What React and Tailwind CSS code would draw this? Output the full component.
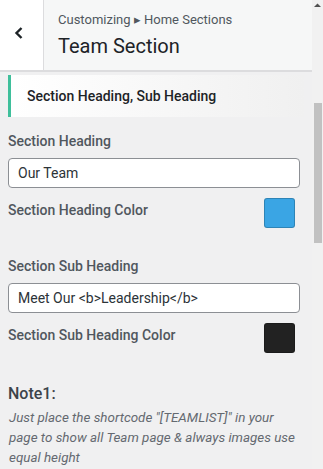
import React from 'react';

function Field({ label, value, top }) {
    return (
        <div className={top}>
            <div className="text-[14px] font-medium text-[#50575e] leading-5">{label}</div>
            <div className="mt-[7px] w-[292px] h-[30px] bg-white border border-[#8c8f94] rounded-[4px] flex items-center px-[9px] text-[14px] text-[#2c3338]">
                {value}
            </div>
        </div>
    );
}

function ColorRow({ label, color }) {
    return (
        <div className="mt-[10px] flex items-start justify-between w-[287px]">
            <div className="text-[14px] font-medium text-[#50575e] leading-5 mt-[2px]">{label}</div>
            <div className="w-[31px] h-[30px] rounded-[3px] border border-black/20" style={{ background: color }} />
        </div>
    );
}

export default function App() {
    return (
        <div className="w-[323px] h-[469px] overflow-hidden bg-[#f0f0f1] flex font-['Roboto',sans-serif]">
            <div className="flex-1 min-w-0">
                <div className="h-[72px] flex bg-[#f6f7f7] border-b-2 border-[#dcdcde]">
                    <div className="w-[44px] bg-white border-r border-[#dcdcde] flex items-center justify-center">
                        <svg width="12" height="14" viewBox="0 0 12 14" className="ml-[-6px] mt-[-4px]">
                            <path d="M8.5 2 L3.5 7 L8.5 12" fill="none" stroke="#1d2327" strokeWidth="2.4" />
                        </svg>
                    </div>
                    <div className="pl-[14px] pt-[10px]">
                        <div className="text-[13px] text-[#50575e] leading-5">Customizing ▸ Home Sections</div>
                        <div className="text-[20px] text-[#1d2327] leading-7 mt-[2px]">Team Section</div>
                    </div>
                </div>
                <div className="px-[8px]">
                    <div className="mt-[3px] h-[42px] border-l-[3px] border-[#3fbf9b] bg-gradient-to-r from-white to-[#f0f0f0] flex items-center pl-[16px] text-[14px] font-medium text-[#1d2327]">
                        Section Heading, Sub Heading
                    </div>
                    <Field top="mt-[14px]" label="Section Heading" value="Our Team" />
                    <ColorRow label="Section Heading Color" color="#3aa5e4" />
                    <Field top="mt-[28px]" label="Section Sub Heading" value="Meet Our <b>Leadership</b>" />
                    <ColorRow label="Section Sub Heading Color" color="#222222" />
                    <div className="mt-[31px] text-[16px] font-medium text-[#3c434a] leading-5">Note1:</div>
                    <p className="mt-[4px] text-[13.4px] italic text-[#646970] leading-5 pl-[1px] pr-[8px]">
                        Just place the shortcode "[TEAMLIST]" in your page to show all Team page &amp; always images use equal height
                    </p>
                </div>
            </div>
            <div className="w-[11px] bg-[#f1f1f1] flex flex-col items-center">
                <svg width="7" height="5" viewBox="0 0 7 5" className="mt-[3px]">
                    <path d="M0 4 L3.5 0.5 L7 4 Z" fill="#505050" />
                </svg>
                <div className="mt-[95px] w-[8px] h-[140px] bg-[#c1c1c1]" />
            </div>
        </div>
    );
}
